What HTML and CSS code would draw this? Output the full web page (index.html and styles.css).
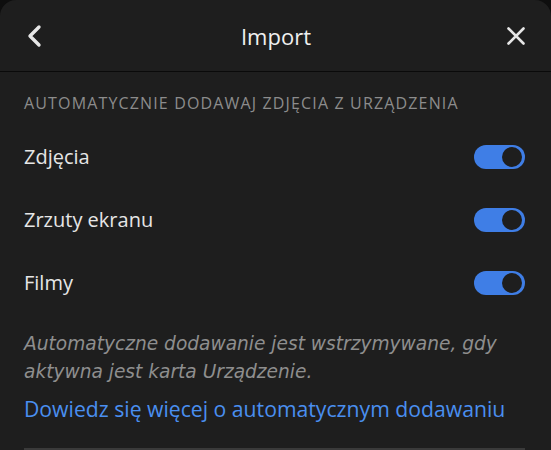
FILE: index.html
```html
<!DOCTYPE html>
<html lang="pl">
<head>
<meta charset="utf-8">
<link rel="stylesheet" href="styles.css">
</head>
<body>
<div class="panel">
  <header class="header">
    <button class="icon-btn" aria-label="Wstecz">
      <svg width="20" height="24" viewBox="0 0 20 24"><path d="M13 3 L4 12 L13 21" fill="none" stroke="#e6e6e6" stroke-width="3.4" stroke-linecap="round" stroke-linejoin="round"/></svg>
    </button>
    <h1 class="title">Import</h1>
    <button class="icon-btn" aria-label="Zamknij">
      <svg width="20" height="20" viewBox="0 0 20 20"><path d="M2.5 2.5 L17.5 17.5 M17.5 2.5 L2.5 17.5" fill="none" stroke="#e6e6e6" stroke-width="2.6" stroke-linecap="round"/></svg>
    </button>
  </header>
  <section class="content">
    <div class="section-title">AUTOMATYCZNIE DODAWAJ ZDJĘCIA Z URZĄDZENIA</div>
    <div class="rows">
      <div class="row"><span class="label">Zdjęcia</span><span class="toggle"><span class="knob"></span></span></div>
      <div class="row"><span class="label">Zrzuty ekranu</span><span class="toggle"><span class="knob"></span></span></div>
      <div class="row"><span class="label">Filmy</span><span class="toggle"><span class="knob"></span></span></div>
    </div>
    <p class="note">Automatyczne dodawanie jest wstrzymywane, gdy aktywna jest karta Urządzenie.</p>
    <a class="link" href="#">Dowiedz się więcej o automatycznym dodawaniu</a>
    <div class="divider"></div>
  </section>
</div>
</body>
</html>
```
FILE: styles.css
```css
html, body {
  margin: 0;
  padding: 0;
  background: #0e0e0e;
}
body {
  font-family: "Open Sans", "Noto Sans", sans-serif;
  color: #e8e8e8;
}
.panel {
  width: 551px;
  height: 450px;
  background: #1e1e1e;
  border-radius: 16px 16px 0 0;
  overflow: hidden;
}
.header {
  height: 72px;
  box-sizing: border-box;
  border-bottom: 1px solid #0a0a0a;
  display: flex;
  align-items: center;
  justify-content: space-between;
  padding: 0 23px 0 24px;
}
.icon-btn {
  background: none;
  border: 0;
  padding: 0;
  width: 24px;
  height: 24px;
  display: flex;
  align-items: center;
  justify-content: center;
}
.title {
  margin: 0;
  font-size: 22px;
  font-weight: 400;
  color: #f0f0f0;
}
.content {
  padding: 0 26px 0 24px;
}
.section-title {
  margin-top: 20px;
  font-size: 16px;
  letter-spacing: 1.15px;
  color: #8c8c8c;
  line-height: 22px;
  white-space: nowrap;
}
.rows {
  margin-top: 11px;
}
.row {
  height: 63px;
  display: flex;
  align-items: center;
  justify-content: space-between;
}
.label {
  font-size: 20px;
  color: #e6e6e6;
}
.toggle {
  width: 51px;
  height: 24px;
  border-radius: 12px;
  background: #3f7ee6;
  display: flex;
  align-items: center;
  justify-content: flex-end;
  padding-right: 3px;
  box-sizing: border-box;
}
.knob {
  width: 20px;
  height: 20px;
  border-radius: 50%;
  background: #1e1e1e;
}
.note {
  margin: 16px 0 0;
  font-family: "DejaVu Sans", sans-serif;
  font-size: 18.6px;
  font-style: italic;
  line-height: 28px;
  color: #8e8e8e;
}
.link {
  display: block;
  margin-top: 8px;
  font-size: 21.2px;
  color: #4a8ff0;
  text-decoration: none;
}
.divider {
  margin-top: 25px;
  height: 2px;
  background: #3a3a3a;
}
```
